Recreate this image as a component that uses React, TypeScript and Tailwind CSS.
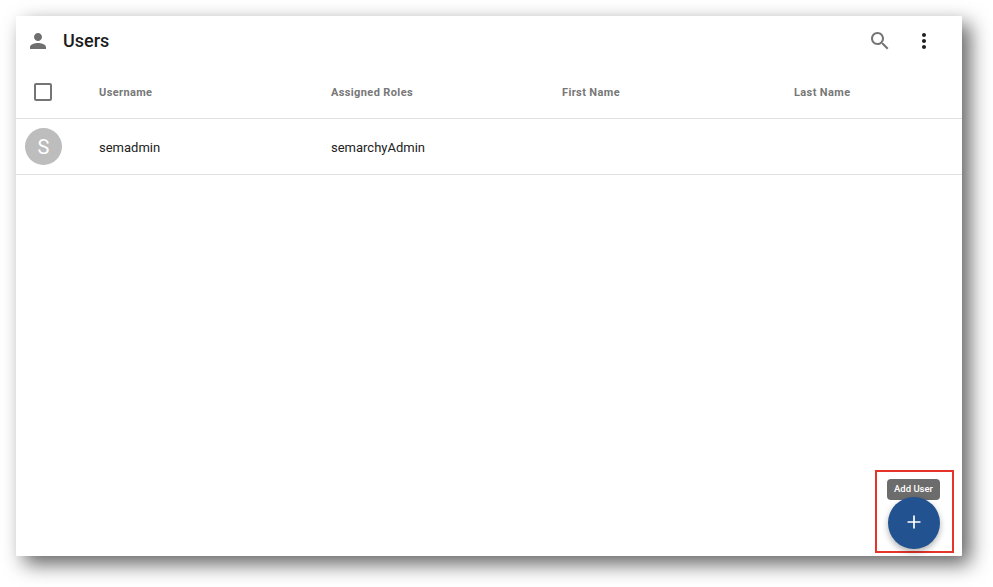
export default function App() {
  const font = { fontFamily: "Roboto, sans-serif" };
  return (
    <div className="w-[993px] h-[587px] bg-white pt-4 pl-4 overflow-hidden" style={font}>
      <div className="relative w-[946px] h-[540px] bg-white rounded-[1px] shadow-[8px_8px_20px_rgba(0,0,0,0.62)] flex flex-col">
        <div className="h-[50px] flex items-center shrink-0">
          <svg className="ml-[10px] w-6 h-6" viewBox="0 0 24 24" fill="#6f6f6f">
            <path d="M12 12c2.21 0 4-1.79 4-4s-1.79-4-4-4-4 1.79-4 4 1.79 4 4 4zm0 2c-2.67 0-8 1.34-8 4v2h16v-2c0-2.66-5.33-4-8-4z" />
          </svg>
          <div className="ml-[13px] text-[18px] font-medium text-[#1c1c1c] leading-none">Users</div>
          <svg className="ml-auto w-6 h-6" viewBox="0 0 24 24" fill="#757575">
            <path d="M15.5 14h-.79l-.28-.27C15.41 12.59 16 11.11 16 9.5 16 5.91 13.09 3 9.5 3S3 5.91 3 9.5 5.91 16 9.5 16c1.61 0 3.09-.59 4.23-1.57l.27.28v.79l5 4.99L20.49 19l-4.99-5zm-6 0C7.01 14 5 11.99 5 9.5S7.01 5 9.5 5 14 7.01 14 9.5 11.99 14 9.5 14z" />
          </svg>
          <svg className="ml-[20px] mr-[26px] w-6 h-6" viewBox="0 0 24 24" fill="#212121">
            <path d="M12 8c1.1 0 2-.9 2-2s-.9-2-2-2-2 .9-2 2 .9 2 2 2zm0 2c-1.1 0-2 .9-2 2s.9 2 2 2 2-.9 2-2-.9-2-2-2zm0 6c-1.1 0-2 .9-2 2s.9 2 2 2 2-.9 2-2-.9-2-2-2z" />
          </svg>
        </div>
        <div className="h-[53px] flex items-center border-b border-[#e0e0e0] shrink-0">
          <div className="w-[83px] flex shrink-0">
            <svg className="ml-[15px] w-6 h-6" viewBox="0 0 24 24" fill="#757575">
              <path d="M19 5v14H5V5h14m0-2H5c-1.1 0-2 .9-2 2v14c0 1.1.9 2 2 2h14c1.1 0 2-.9 2-2V5c0-1.1-.9-2-2-2z" />
            </svg>
          </div>
          <div className="grid grid-cols-[232px_231px_232px_1fr] flex-1 pt-[2px] text-[11px] font-bold tracking-[0.38px] text-[#777777]">
            <div>Username</div>
            <div>Assigned Roles</div>
            <div>First Name</div>
            <div>Last Name</div>
          </div>
        </div>
        <div className="h-[56px] flex items-center border-b border-[#e0e0e0] shrink-0">
          <div className="w-[83px] flex shrink-0">
            <div className="ml-[9px] w-[37px] h-[37px] rounded-full bg-[#bdbdbd] text-white text-[20px] flex items-center justify-center">S</div>
          </div>
          <div className="grid grid-cols-[232px_231px_232px_1fr] flex-1 pt-[2px] text-[13px] text-[#222222]">
            <div>semadmin</div>
            <div>semarchyAdmin</div>
            <div />
            <div />
          </div>
        </div>
        <div className="absolute left-[859px] top-[454px] w-[79px] h-[83px] border-2 border-[#e5352b]" />
        <div className="absolute left-[871px] top-[463px] w-[53px] h-[21px] rounded-[4px] bg-[#6c6c6c] text-white text-[9.5px] font-medium flex items-center justify-center whitespace-nowrap">Add User</div>
        <div className="absolute left-[872px] top-[481px] w-[52px] h-[52px] rounded-full bg-[#225390] shadow-[0_3px_6px_rgba(0,0,0,0.3)] flex items-center justify-center">
          <svg className="w-6 h-6 -mt-[2px]" viewBox="0 0 24 24" fill="none" stroke="#ffffff" strokeWidth="1.7">
            <path d="M12 5.5v13M5.5 12h13" />
          </svg>
        </div>
      </div>
    </div>
  );
}
